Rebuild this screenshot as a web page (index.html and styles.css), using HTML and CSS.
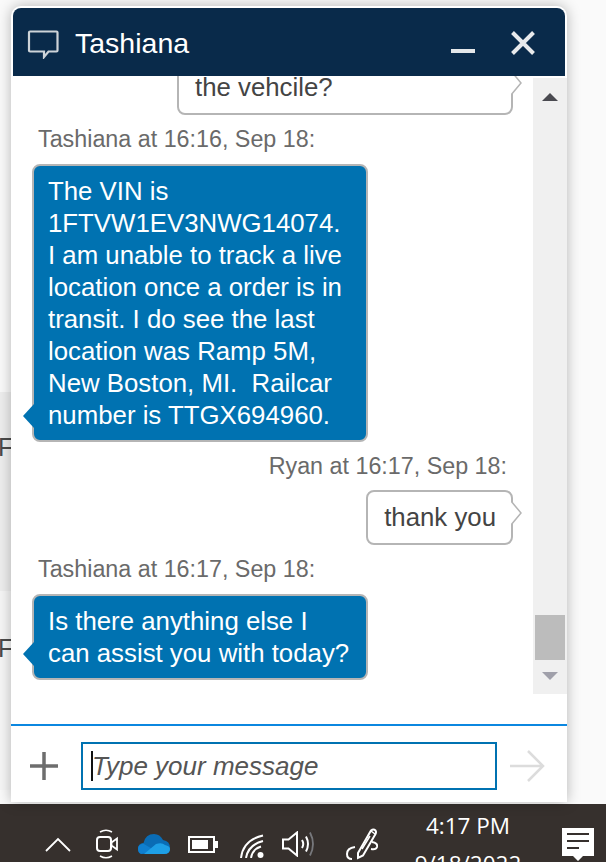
FILE: index.html
```html
<!DOCTYPE html>
<html lang="en">

<head>
    <meta charset="UTF-8">
    <title>Chat - Tashiana</title>
    <link rel="stylesheet" href="styles.css">
</head>

<body>
    <div class="desktop">
        <div class="side">
            <div class="side-band"><span class="side-f">F</span></div>
            <div class="side-band side-band-light"><span class="side-f">F</span></div>
        </div>

        <div class="chat">
            <header class="chat-head">
                <svg class="head-bubble" width="32" height="30" viewBox="0 0 32 30">
                    <path d="M3 2.500H29.500Q30.500 2.500 30.500 3.500V21.500Q30.500 22.500 29.500 22.500H21.500L17 28V22.500H3Q2 22.500 2 21.500V3.500Q2 2.500 3 2.500Z" fill="none" stroke="#cdd3d8" stroke-width="2.200" />
                </svg>
                <span class="head-name">Tashiana</span>
                <svg class="head-min" width="26" height="6" viewBox="0 0 26 6">
                    <rect x="1" y="1" width="24" height="4" fill="#e4e7ea" />
                </svg>
                <svg class="head-close" width="26" height="26" viewBox="0 0 26 26">
                    <path d="M2.500 2.500L23.500 23.500M23.500 2.500L2.500 23.500" stroke="#e8eaec" stroke-width="4" fill="none" />
                </svg>
            </header>

            <div class="chat-body">
                <div class="msg-list">
                    <div class="bubble bubble-out bubble-cut">the vehcile?
                        <svg class="tail-out" width="11" height="26" viewBox="0 0 11 26">
                            <path d="M0 1L10 13L0 25V1Z" fill="#fff" />
                            <path d="M0 1L10 13L0 25" fill="none" stroke="#b5b5b5" stroke-width="1.500" />
                        </svg>
                    </div>
                    <div class="msg-label">Tashiana at 16:16, Sep 18:</div>
                    <div class="bubble bubble-in">The VIN is 1FTVW1EV3NWG14074. I am unable to track a live location once a order is in transit. I do see the last location was Ramp 5M, New Boston, MI.&nbsp; Railcar number is TTGX694960.
                        <svg class="tail-in" width="11" height="24" viewBox="0 0 11 24">
                            <path d="M11 0L0 12L11 24Z" fill="#0072b1" />
                        </svg>
                    </div>
                    <div class="msg-label msg-label-out">Ryan at 16:17, Sep 18:</div>
                    <div class="bubble bubble-out">thank you
                        <svg class="tail-out" width="11" height="26" viewBox="0 0 11 26">
                            <path d="M0 1L10 13L0 25V1Z" fill="#fff" />
                            <path d="M0 1L10 13L0 25" fill="none" stroke="#b5b5b5" stroke-width="1.500" />
                        </svg>
                    </div>
                    <div class="msg-label">Tashiana at 16:17, Sep 18:</div>
                    <div class="bubble bubble-in">Is there anything else I can assist you with today?
                        <svg class="tail-in" width="11" height="24" viewBox="0 0 11 24">
                            <path d="M11 0L0 12L11 24Z" fill="#0072b1" />
                        </svg>
                    </div>
                </div>
                <div class="scrollbar">
                    <span class="arrow-up"></span>
                    <span class="thumb"></span>
                    <span class="arrow-down"></span>
                </div>
            </div>

            <div class="chat-gap"></div>

            <div class="composer">
                <svg class="add-icon" width="30" height="30" viewBox="0 0 30 30">
                    <path d="M15 1V29M1 15H29" stroke="#6d6d6d" stroke-width="3.500" fill="none" />
                </svg>
                <label class="msg-box">
                    <span class="caret"></span>
                    <input type="text" class="msg-input" placeholder="Type your message">
                </label>
                <svg class="send-icon" width="36" height="34" viewBox="0 0 36 34">
                    <path d="M1 17H33M19 2L34 17L19 32" stroke="#dcdcdc" stroke-width="2.500" fill="none" />
                </svg>
            </div>
        </div>
    </div>

    <div class="taskbar">
        <div class="tray">
            <svg width="26" height="15" viewBox="0 0 26 15">
                <path d="M1 14L13 2L25 14" stroke="#fff" stroke-width="1.800" fill="none" />
            </svg>
            <svg class="tray-meet" width="22" height="30" viewBox="0 0 22 30">
                <path d="M4 3Q10 -0.500 16 3M4 27Q10 30.500 16 27" stroke="#fff" stroke-width="1.500" fill="none" />
                <rect x="1" y="8" width="14" height="14" rx="3" stroke="#fff" stroke-width="2" fill="none" />
                <path d="M15.500 13.500L21 9.500V20.500L15.500 16.500Z" stroke="#fff" stroke-width="1.800" fill="none" />
            </svg>
            <svg class="tray-cloud" width="32" height="22" viewBox="0 0 32 22">
                <path d="M6 21Q0 21 0 15.500Q0 10.500 5.500 10Q7.500 1 16 1Q22 1 25 7Q32 8 32 15Q32 21 26 21Z" fill="#0a6cb5" />
                <path d="M3 21Q0 20 0 15.500Q0 12 5 10.500L18 18Z" fill="#0f7fd0" />
                <path d="M6 21L18 11Q24 9 27 12Q32 13 32 16Q32 21 26 21Z" fill="#1e9fe6" />
            </svg>
            <svg class="tray-battery" width="30" height="17" viewBox="0 0 30 17">
                <rect x="1" y="1" width="25" height="15" stroke="#fff" stroke-width="2" fill="none" />
                <rect x="4" y="4" width="16" height="9" fill="#fff" />
                <rect x="27" y="5" width="3" height="7" fill="#fff" />
            </svg>
            <svg class="tray-wifi" width="24" height="24" viewBox="0 0 24 24">
                <path d="M1 24Q3 6 23 1.500M6 24Q8 11 23 7M11 24Q12.500 15 21 12.500" stroke="#fff" stroke-width="2" fill="none" />
                <circle cx="20.500" cy="21" r="3" fill="#fff" />
            </svg>
            <svg class="tray-sound" width="33" height="26" viewBox="0 0 33 26">
                <path d="M1 8.500H6.500L15 1.500V24.500L6.500 17.500H1Z" stroke="#fff" stroke-width="2" fill="none" />
                <path d="M20 9Q22.500 13 20 17M24 5.500Q28 13 24 20.500" stroke="#fff" stroke-width="2" fill="none" />
                <path d="M28 1.500Q34 13 28 24.500" stroke="#77787c" stroke-width="1.800" fill="none" />
            </svg>
            <svg class="tray-pen" width="32" height="32" viewBox="0 0 32 32">
                <path d="M12 25L25 2.500Q27.500 0.500 29.500 2.500Q30.500 4 29.500 6L17 27.500L12 30Z" stroke="#fff" stroke-width="2" fill="none" />
                <path d="M16 21L24 8M25 3L29 6" stroke="#fff" stroke-width="1.500" fill="none" />
                <path d="M26 14Q32 15 31 19Q30 22 25 21M9 19Q1 20 1 26Q1 31 6 31" stroke="#fff" stroke-width="2" fill="none" />
            </svg>
        </div>
        <div class="clock">
            <div>4:17 PM</div>
            <div>9/18/2022</div>
        </div>
        <div class="notify">
            <svg width="32" height="33" viewBox="0 0 32 33">
                <path d="M0 0H32V28H21L16 33L11 28H0Z" fill="#fff" />
                <path d="M5 6H27M5 13H27M5 20H17" stroke="#36302d" stroke-width="2" fill="none" />
            </svg>
        </div>
    </div>
</body>

</html>
```

FILE: styles.css
```css
* {
    box-sizing: border-box;
}

body {
    margin: 0;
    width: 606px;
    height: 862px;
    overflow: hidden;
    background-color: #fafafa;
    font-family: "Liberation Sans", Arial, sans-serif;
}

.desktop {
    position: relative;
    height: 804px;
    padding: 6px 0 2px 11px;
    background-color: #fafafa;
}

.side {
    position: absolute;
    top: 392px;
    left: 0;
    width: 11px;
    overflow: hidden;
}

.side-band {
    height: 199px;
    padding-top: 40px;
    background-color: #eeeeee;
    color: #4a4a4a;
    font-size: 25px;
    line-height: 30px;
}

.side-band-light {
    padding-top: 42px;
    background-color: #f6f6f6;
}

.side-f {
    margin-left: -2px;
}

.chat {
    position: relative;
    display: flex;
    flex-direction: column;
    width: 556px;
    height: 796px;
    padding-top: 2px;
    background-color: #ffffff;
    border-radius: 10px 10px 0 0;
    box-shadow: 0 0 14px rgba(0, 0, 0, 0.28);
}

.chat-head {
    display: flex;
    align-items: center;
    height: 68px;
    margin: 0 2px;
    padding-left: 14px;
    background-color: #092a4a;
    border-radius: 8px 8px 0 0;
    color: #ffffff;
}

.head-bubble {
    margin-top: 3px;
}

.head-name {
    margin-left: 16px;
    padding-top: 3px;
    font-size: 28.500px;
}

.head-min {
    margin: 18px 0 0 261px;
}

.head-close {
    margin: 2px 0 0 34px;
}

.chat-body {
    display: flex;
    height: 618px;
}

.msg-list {
    display: flex;
    flex-direction: column;
    justify-content: flex-end;
    align-items: flex-start;
    width: 522px;
    padding: 0 20px 14px 21px;
    overflow: hidden;
}

.msg-label {
    margin: 9px 0 10px 6px;
    color: #6a6a6a;
    font-size: 23.300px;
    line-height: 30px;
}

.msg-label-out {
    align-self: flex-end;
    margin: 9px 6px 9px 0;
}

.bubble {
    position: relative;
    flex-shrink: 0;
    max-width: 336px;
    padding: 9px 15px 9.500px 14px;
    border: 2px solid #b5b5b5;
    border-radius: 8px;
    font-size: 25.800px;
    line-height: 32px;
}

.bubble-in {
    background-color: #0072b1;
    color: #ffffff;
}

.bubble-out {
    align-self: flex-end;
    padding-left: 16px;
    background-color: #ffffff;
    color: #444444;
}

.bubble-cut {
    width: 336px;
    padding-top: 40px;
}

.tail-in {
    position: absolute;
    left: -11px;
    bottom: 12px;
}

.tail-out {
    position: absolute;
    right: -11px;
    bottom: 17px;
}

.scrollbar {
    display: flex;
    flex-direction: column;
    align-items: center;
    width: 34px;
    margin-top: 2px;
    background-color: #f0f0f0;
}

.arrow-up,
.arrow-down {
    width: 0;
    height: 0;
    border-left: 8px solid transparent;
    border-right: 8px solid transparent;
}

.arrow-up {
    margin-top: 15px;
    border-bottom: 8px solid #4a4a50;
}

.thumb {
    width: 30px;
    height: 45px;
    margin-top: auto;
    background-color: #bcbcbc;
}

.arrow-down {
    margin: 12px 0 14px;
    border-top: 8px solid #a0a0aa;
}

.chat-gap {
    height: 32px;
    border-bottom: 2px solid #0b87e0;
}

.composer {
    display: flex;
    align-items: center;
    height: 76px;
    padding: 4px 0 0 18px;
}

.msg-box {
    display: flex;
    align-items: center;
    width: 416px;
    height: 48px;
    margin-left: 22px;
    padding-left: 8px;
    border: 2px solid #0072b1;
}

.caret {
    width: 2px;
    height: 30px;
    background-color: #111111;
}

.msg-input {
    flex: 1;
    min-width: 0;
    margin-left: -1px;
    padding: 1px 0 0;
    border: none;
    outline: none;
    background: transparent;
    font-family: "Liberation Sans", Arial, sans-serif;
    font-size: 26px;
    font-style: italic;
}

.msg-input::placeholder {
    color: #555555;
    opacity: 1;
}

.send-icon {
    margin-left: 12px;
}

.taskbar {
    display: flex;
    height: 58px;
    padding-left: 45px;
    overflow: hidden;
    background-color: #36302d;
    color: #ffffff;
}

.tray {
    display: flex;
    align-items: center;
    height: 36px;
    margin-top: 22px;
}

.tray-meet {
    margin-left: 25px;
}

.tray-cloud {
    margin-left: 20px;
}

.tray-battery {
    margin-left: 18px;
}

.tray-wifi {
    margin: 4px 0 0 22px;
}

.tray-sound {
    margin-left: 18px;
}

.tray-pen {
    margin-left: 31px;
}

.clock {
    flex-shrink: 0;
    width: 180px;
    padding-top: 3px;
    font-family: "Open Sans", sans-serif;
    font-size: 22.500px;
    line-height: 38px;
    text-align: center;
}

.notify {
    margin: 24px 0 0 4px;
}
```
